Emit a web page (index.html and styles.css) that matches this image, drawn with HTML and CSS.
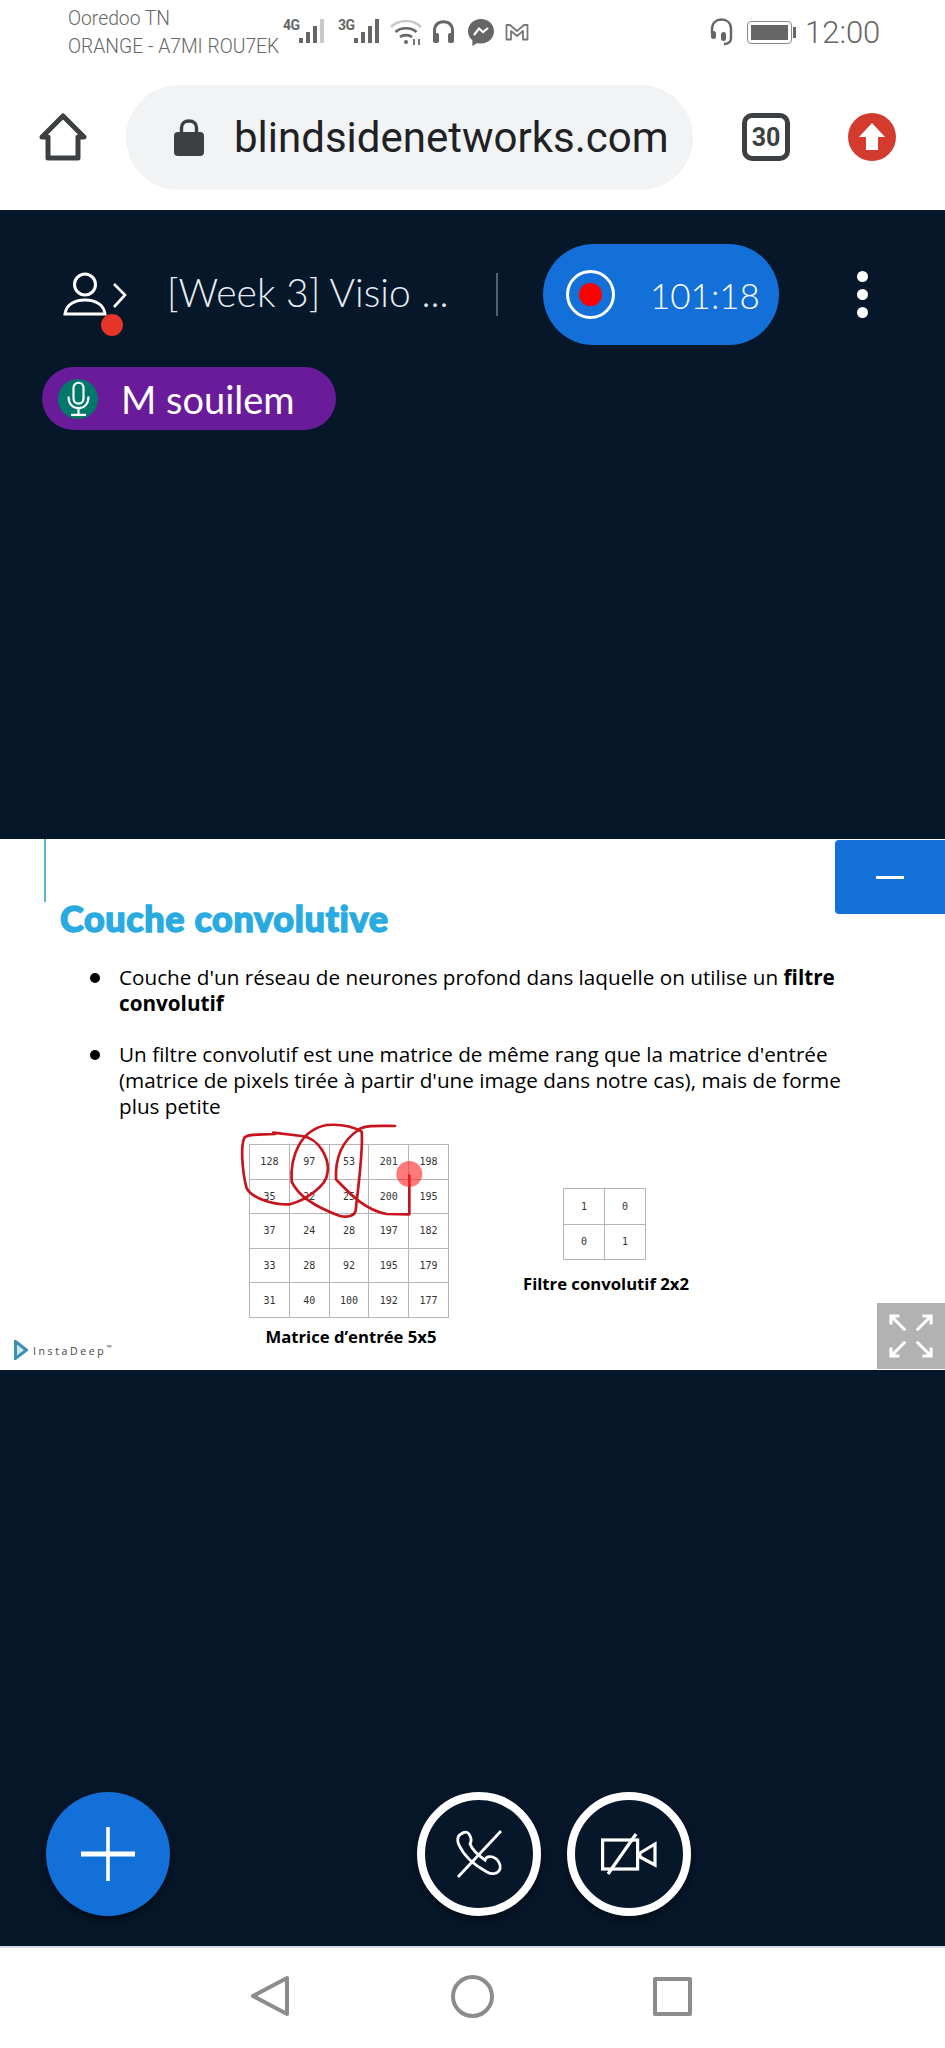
FILE: index.html
```html
<!DOCTYPE html>
<html lang="en">
  <head>
    <meta charset="UTF-8" />
    <meta name="viewport" content="width=device-width, initial-scale=1.0" />
    <title>blindsidenetworks.com</title>
    <link rel="stylesheet" href="styles.css">
  </head>
  <body>
    <div class="status">
      <div class="carriers">
        <span>Ooredoo TN</span>
        <span>ORANGE - A7MI ROU7EK</span>
      </div>
      <div class="net net-4g">
        <span class="net-label">4G</span>
        <svg class="bars" viewBox="0 0 28 26"><rect x="0" y="20" width="4" height="5" fill="#666"/><rect x="7" y="14" width="4" height="11" fill="#666"/><rect x="14" y="8" width="4" height="17" fill="#666"/><rect x="21" y="1" width="4" height="24" fill="#c9c9c9"/></svg>
      </div>
      <div class="net net-3g">
        <span class="net-label">3G</span>
        <svg class="bars" viewBox="0 0 28 26"><rect x="0" y="20" width="4" height="5" fill="#666"/><rect x="7" y="14" width="4" height="11" fill="#666"/><rect x="14" y="8" width="4" height="17" fill="#666"/><rect x="21" y="1" width="4" height="24" fill="#666"/></svg>
      </div>
      <svg class="ico-wifi" viewBox="0 0 32 26" fill="none" stroke="#666" stroke-width="2.6"><path d="M1 8C9 0 23 0 31 8" stroke="#c9c9c9"/><path d="M5.500 13C11 8 21 8 26.500 13"/><path d="M10 18C13 15.500 19 15.500 22 18"/><circle cx="16" cy="23" r="2" fill="#666" stroke="none"/><path d="M24 20V26M29 20V26" stroke-width="1.800"/></svg>
      <svg class="ico-phones" viewBox="0 0 23 24" fill="none"><path d="M2.500 16V11C2.500 5 6 1.800 11.500 1.800S20.500 5 20.500 11V16" stroke="#666" stroke-width="3"/><rect x="1" y="13" width="6" height="10" rx="2" fill="#666"/><rect x="16" y="13" width="6" height="10" rx="2" fill="#666"/></svg>
      <svg class="ico-msg" viewBox="0 0 26 27"><path d="M13 0C5.800 0 0 5.400 0 12.300C0 16 1.600 19.100 4.400 21.300V27L9.200 24C10.400 24.400 11.700 24.600 13 24.600C20.200 24.600 26 19.200 26 12.300S20.200 0 13 0Z" fill="#666"/><path d="M6 16L11 9.500L15 13L20 9" fill="none" stroke="#fff" stroke-width="2.200"/></svg>
      <svg class="ico-mail" viewBox="0 0 24 18" fill="none" stroke="#777" stroke-width="1.800" stroke-linejoin="round"><path d="M1.500 16.500V2H5L12 8L19 2H22.500V16.500H18V8L12 13L6 8V16.500Z"/></svg>
      <svg class="ico-headset" viewBox="0 0 25 28" fill="none" stroke="#666" stroke-width="2.400"><path d="M3 16V11C3 5 7 1.500 12.500 1.500S22 5 22 11V20C22 24 19 26 15 26"/><rect x="2" y="13" width="5" height="8" rx="2.500" fill="#666" stroke="none"/><rect x="12" y="14" width="5" height="9" rx="2.500" fill="#666" stroke="none"/></svg>
      <div class="battery"><span class="battery-fill"></span></div>
      <span class="battery-nub"></span>
      <span class="clock">12:00</span>
    </div>

    <div class="toolbar">
      <svg class="home" viewBox="0 0 48 48" fill="none" stroke="#3c4043" stroke-width="5" stroke-linejoin="round"><path d="M24 3L45 24H39V45H9V24H3Z"/></svg>
      <div class="urlbar">
        <svg class="lock" viewBox="0 0 30 38"><path d="M7.500 16V10C7.500 5.500 10.500 3 15 3S22.500 5.500 22.500 10V16" fill="none" stroke="#3c4043" stroke-width="3.400"/><rect x="0" y="14" width="30" height="24" rx="4" fill="#3c4043"/></svg>
        <span class="url">blindsidenetworks.com</span>
      </div>
      <div class="tabs">30</div>
      <svg class="update" viewBox="0 0 48 48"><circle cx="24" cy="24" r="24" fill="#d23b2e"/><path d="M24 10L37 24H30V37H18V24H11Z" fill="#fff"/></svg>
    </div>

    <div class="app">
      <div class="upper">
        <div class="topbar">
          <div class="userlist">
            <svg class="user" viewBox="0 0 66 50" fill="none" stroke="#fff" stroke-width="3"><circle cx="23" cy="14.500" r="10.500"/><path d="M3 44C4 35 12 30 23 30S42 35 43 44Z"/><path d="M52 14L63 25L52 37" stroke-width="2.600"/></svg>
            <span class="user-dot"></span>
          </div>
          <span class="meeting">[Week 3] Visio ...</span>
          <span class="sep"></span>
          <div class="rec">
            <span class="rec-ring"><span class="rec-dot"></span></span>
            <span class="rec-time">101:18</span>
          </div>
          <div class="kebab"><span></span><span></span><span></span></div>
        </div>
        <div class="talker">
          <span class="talker-ava">
            <svg viewBox="0 0 30 42" fill="none" stroke="#fff" stroke-width="2.600"><rect x="9" y="1.500" width="12" height="25" rx="6"/><path d="M3 18C3 27 8 32 15 32S27 27 27 18M15 32V40M6 40H24"/></svg>
          </span>
          <span class="talker-name">M souilem</span>
        </div>
      </div>

      <div class="slide">
        <div class="slide-rule"></div>
        <h2 class="slide-title">Couche convolutive</h2>
        <ul class="points">
          <li>Couche d'un réseau de neurones profond dans laquelle on utilise un <b>filtre</b> <b>convolutif</b></li>
          <li>Un filtre convolutif est une matrice de même rang que la matrice d'entrée (matrice de pixels tirée à partir d'une image dans notre cas), mais de forme plus petite</li>
        </ul>
        <div class="figures">
          <div class="logo">
            <svg viewBox="0 0 14 20"><path d="M1.500 1.500L12.500 10L1.500 18.500Z" fill="#cfe6f0" stroke="#3f8fb5" stroke-width="3"/></svg>
            <span>InstaDeep<sup>™</sup></span>
          </div>
          <div class="figure figure-matrix">
            <table class="grid">
              <tr><td>128</td><td>97</td><td>53</td><td>201</td><td>198</td></tr>
              <tr><td>35</td><td>22</td><td>25</td><td>200</td><td>195</td></tr>
              <tr><td>37</td><td>24</td><td>28</td><td>197</td><td>182</td></tr>
              <tr><td>33</td><td>28</td><td>92</td><td>195</td><td>179</td></tr>
              <tr><td>31</td><td>40</td><td>100</td><td>192</td><td>177</td></tr>
            </table>
            <p>Matrice d’entrée 5x5</p>
          </div>
          <div class="figure figure-filter">
            <table class="grid">
              <tr><td>1</td><td>0</td></tr>
              <tr><td>0</td><td>1</td></tr>
            </table>
            <p>Filtre convolutif 2x2</p>
          </div>
        </div>

        <svg class="marks" viewBox="0 0 1440 750" fill="none" stroke="#c8141c" stroke-width="8" stroke-linecap="round" stroke-linejoin="round">
          <path d="M165 72C120 75 80 70 72 85C60 120 70 200 80 235C100 270 170 285 210 283C260 270 320 225 322 190C330 150 300 85 245 78L160 68"/>
          <path d="M215 215C210 140 240 60 320 45C360 42 400 50 425 65C430 120 415 230 407 300C405 320 380 322 360 318C310 300 240 270 215 215"/>
          <path d="M525 48C470 48 430 45 415 60C370 90 345 140 348 208C380 240 430 300 500 312L568 313V197"/>
          <circle cx="568" cy="192" r="39" fill="#ff2020" fill-opacity="0.6" stroke="none"/>
        </svg>

        <div class="minimize"><span></span></div>
        <div class="fullscreen">
          <svg viewBox="0 0 46 46" fill="none" stroke="#fff" stroke-width="3.200"><path d="M2 11V2H11M2 2L17 17M35 2H44V11M44 2L29 17M2 35V44H11M2 44L17 29M44 35V44H35M44 44L29 29"/></svg>
        </div>
      </div>

      <div class="lower">
        <div class="fab">
          <svg viewBox="0 0 54 54" stroke="#fff"><path d="M0 27H54" stroke-width="5"/><path d="M27 0V54" stroke-width="3.600"/></svg>
        </div>
        <div class="actions">
          <div class="action">
            <svg class="ico-phone" viewBox="0 0 48 48" fill="none" stroke="#fff" stroke-width="2.800"><path d="M6 4C2 6 2 11 4 15C9 26 19 35 32 42C37 45 43 44 45 39C46 34 43 29 38 27C34 26 31 27 30 30C24 26 18 21 15 14C17 11 16 7 14 4C12 1 9 2 6 4Z"/><path d="M46 1L3 47"/></svg>
          </div>
          <div class="action">
            <svg class="ico-cam" viewBox="0 0 56 42" fill="none" stroke="#fff" stroke-width="3.200"><rect x="1.600" y="7" width="35" height="29"/><path d="M39 20L54 11V32L39 24Z"/><path d="M35 1L7 41"/></svg>
          </div>
        </div>
      </div>
    </div>

    <div class="nav">
      <svg class="nav-back" viewBox="0 0 40 42" fill="none" stroke="#8c8c8c" stroke-width="4" stroke-linejoin="round"><path d="M37 3V39L3 21Z"/></svg>
      <svg class="nav-home" viewBox="0 0 43 43" fill="none" stroke="#8c8c8c" stroke-width="4"><circle cx="21.500" cy="21.500" r="19.500"/></svg>
      <svg class="nav-recent" viewBox="0 0 39 39" fill="none" stroke="#8c8c8c" stroke-width="4" stroke-linejoin="round"><rect x="2" y="2" width="35" height="35"/></svg>
    </div>
  </body>
</html>
```

FILE: styles.css
```css
* {
  margin: 0;
  padding: 0;
  box-sizing: border-box;
}

body {
  width: 945px;
  height: 2048px;
  display: flex;
  flex-direction: column;
  overflow: hidden;
  background: #fff;
  font-family: "Open Sans", sans-serif;
}

svg {
  display: block;
  flex: none;
}

/* status bar */
.status {
  height: 64px;
  display: flex;
  align-items: center;
  padding-left: 68px;
  color: #666;
  font-family: Roboto, sans-serif;
}

.carriers {
  width: 215px;
  display: flex;
  flex-direction: column;
  gap: 9px;
  font-size: 19.300px;
  font-weight: 300;
  line-height: 19px;
  white-space: nowrap;
}

.net {
  display: flex;
  align-items: flex-start;
  height: 28px;
}

.net-label {
  font-family: "Liberation Sans Narrow", "Roboto", sans-serif;
  font-size: 14px;
  font-weight: 700;
  line-height: 14px;
  width: 16px;
  letter-spacing: -0.5px;
}

.bars {
  width: 28px;
  height: 26px;
}

.net-3g {
  margin-left: 11px;
}

.ico-wifi {
  width: 32px;
  height: 26px;
  margin-left: 8px;
}

.ico-phones {
  width: 23px;
  height: 24px;
  margin-left: 10px;
}

.ico-msg {
  width: 26px;
  height: 27px;
  margin-left: 13px;
}

.ico-mail {
  width: 24px;
  height: 18px;
  margin-left: 11px;
}

.ico-headset {
  width: 25px;
  height: 28px;
  margin-left: 180px;
}

.battery {
  width: 45px;
  height: 23px;
  margin-left: 13px;
  padding: 3px;
  border: 1.500px solid #8a8a8a;
  border-radius: 4px;
}

.battery-fill {
  display: block;
  height: 100%;
  background: #666;
}

.battery-nub {
  width: 3px;
  height: 11px;
  margin-left: 1px;
  background: #666;
}

.clock {
  margin-left: 9px;
  font-size: 31px;
  font-weight: 300;
}

/* browser toolbar */
.toolbar {
  height: 146px;
  display: flex;
  align-items: center;
  padding-left: 39px;
}

.home {
  width: 48px;
  height: 48px;
}

.urlbar {
  width: 567px;
  height: 105px;
  margin-left: 39px;
  display: flex;
  align-items: center;
  padding-left: 48px;
  border-radius: 53px;
  background: #f1f3f4;
}

.lock {
  width: 30px;
  height: 38px;
}

.url {
  margin-left: 30px;
  font-family: Roboto, sans-serif;
  font-size: 42px;
  color: #202124;
}

.tabs {
  width: 48px;
  height: 48px;
  margin-left: 49px;
  display: flex;
  align-items: center;
  justify-content: center;
  border: 5px solid #3c4043;
  border-radius: 10px;
  font-family: Roboto, sans-serif;
  font-size: 25px;
  font-weight: 700;
  color: #3c4043;
}

.update {
  width: 48px;
  height: 48px;
  margin-left: 58px;
}

/* conference app */
.app {
  flex: 1;
  display: flex;
  flex-direction: column;
  background: #06172a;
  color: #fff;
}

.upper {
  height: 629px;
  padding-top: 34px;
}

.topbar {
  height: 101px;
  display: flex;
  align-items: center;
  padding-left: 62px;
}

.userlist {
  position: relative;
  width: 66px;
  height: 50px;
}

.user {
  width: 66px;
  height: 50px;
}

.user-dot {
  position: absolute;
  left: 39px;
  top: 44px;
  width: 22px;
  height: 22px;
  border-radius: 50%;
  background: #e53528;
}

.meeting {
  width: 329px;
  margin: -6px 0 0 39px;
  font-family: Lato, sans-serif;
  font-size: 39px;
  font-weight: 300;
  white-space: nowrap;
  color: #e6edf2;
}

.sep {
  width: 2px;
  height: 43px;
  background: #56606c;
}

.rec {
  width: 236px;
  height: 101px;
  margin-left: 45px;
  display: flex;
  align-items: center;
  padding-left: 23px;
  border-radius: 51px;
  background: #1270d8;
}

.rec-ring {
  width: 49px;
  height: 49px;
  display: flex;
  align-items: center;
  justify-content: center;
  border: 3px solid #fff;
  border-radius: 50%;
}

.rec-dot {
  width: 23px;
  height: 23px;
  border-radius: 50%;
  background: #f00;
}

.rec-time {
  margin-left: 35px;
  font-family: Lato, sans-serif;
  font-size: 35px;
  font-weight: 300;
}

.kebab {
  margin-left: 78px;
  display: flex;
  flex-direction: column;
  gap: 7px;
}

.kebab span {
  width: 11px;
  height: 11px;
  border-radius: 50%;
  background: #fff;
}

.talker {
  width: 294px;
  height: 63px;
  margin: 22px 0 0 42px;
  display: flex;
  align-items: center;
  padding-left: 16px;
  border-radius: 32px;
  background: #6a1b9a;
}

.talker-ava {
  width: 40px;
  height: 40px;
  display: flex;
  align-items: center;
  justify-content: center;
  border-radius: 50%;
  background: #00796b;
}

.talker-ava svg {
  width: 25px;
  height: 36px;
}

.talker-name {
  margin-left: 23px;
  font-family: Lato, sans-serif;
  font-size: 38px;
}

/* slide */
.slide {
  position: relative;
  height: 531px;
  background: #fff;
  color: #000;
}

.slide-rule {
  width: 2px;
  height: 63px;
  margin-left: 44px;
  background: #5fb4d8;
}

.slide-title {
  margin: -4px 0 0 60px;
  font-family: Lato, sans-serif;
  font-size: 36px;
  font-weight: 900;
  line-height: 40px;
  letter-spacing: 0.6px;
  color: #29abe2;
  -webkit-text-stroke: 1.400px #29abe2;
}

.points {
  margin: 26px 0 0 119px;
  width: 740px;
  list-style: none;
  font-size: 20.700px;
  line-height: 26px;
}

.points li {
  position: relative;
  margin-bottom: 25px;
}

.points li::before {
  content: "";
  position: absolute;
  left: -29px;
  top: 9px;
  width: 10px;
  height: 10px;
  border-radius: 50%;
  background: #000;
}

.figures {
  position: absolute;
  left: 14px;
  top: 305px;
  display: flex;
  align-items: flex-start;
}

.logo {
  width: 98px;
  margin-top: 196px;
  display: flex;
  align-items: center;
  gap: 5px;
  font-family: "Open Sans", sans-serif;
  font-size: 10.500px;
  letter-spacing: 2.600px;
  color: #444;
  white-space: nowrap;
}

.logo svg {
  width: 14px;
  height: 20px;
}

.logo sup {
  font-size: 7px;
  letter-spacing: 0;
}

.figure p {
  font-size: 16.700px;
  font-weight: 700;
  text-align: center;
  white-space: nowrap;
}

.figure-matrix {
  width: 200px;
  margin-left: 137px;
}

.figure-matrix p {
  margin-top: 7px;
  padding-left: 4px;
}

.figure-filter {
  width: 83px;
  margin: 44px 0 0 114px;
}

.figure-filter p {
  margin: 12px -40px 0;
}

.grid {
  border-collapse: collapse;
  width: 100%;
  table-layout: fixed;
  font-family: "DejaVu Sans Mono", monospace;
  font-size: 10px;
  color: #333;
}

.grid td {
  height: 34.600px;
  text-align: center;
  border: 1px solid #b5b5b5;
}

.figure-filter .grid td {
  height: 35.500px;
}

.marks {
  position: absolute;
  left: 220px;
  top: 271px;
  width: 480px;
  height: 250px;
}

.minimize {
  position: absolute;
  top: 1px;
  right: 0;
  width: 110px;
  height: 74px;
  display: flex;
  align-items: center;
  justify-content: center;
  border-radius: 4px 0 0 4px;
  background: #1270d8;
}

.minimize span {
  width: 28px;
  height: 3px;
  background: #fff;
}

.fullscreen {
  position: absolute;
  right: 0;
  bottom: 1px;
  width: 68px;
  height: 66px;
  display: flex;
  align-items: center;
  justify-content: center;
  background: #b2b2b2;
}

.fullscreen svg {
  width: 44px;
  height: 44px;
}

/* bottom actions */
.lower {
  flex: 1;
  display: flex;
  align-items: flex-start;
  padding: 422px 0 0 46px;
}

.fab {
  width: 124px;
  height: 124px;
  display: flex;
  align-items: center;
  justify-content: center;
  border-radius: 50%;
  background: #1270d8;
  box-shadow: 0 4px 10px rgba(0, 0, 0, 0.5);
}

.fab svg {
  width: 54px;
  height: 54px;
}

.actions {
  margin-left: 247px;
  display: flex;
  gap: 26px;
}

.action {
  width: 124px;
  height: 124px;
  display: flex;
  align-items: center;
  justify-content: center;
  border: 8px solid #fff;
  border-radius: 50%;
  box-shadow: 0 4px 10px rgba(0, 0, 0, 0.5);
}

.ico-phone {
  width: 48px;
  height: 48px;
}

.ico-cam {
  width: 56px;
  height: 42px;
}

/* android nav */
.nav {
  height: 102px;
  display: flex;
  align-items: center;
  padding: 0 0 4px 250px;
  border-top: 2px solid #d8dbe8;
}

.nav-back {
  width: 40px;
  height: 42px;
}

.nav-home {
  width: 43px;
  height: 43px;
  margin-left: 161px;
}

.nav-recent {
  width: 39px;
  height: 39px;
  margin-left: 159px;
}
```
